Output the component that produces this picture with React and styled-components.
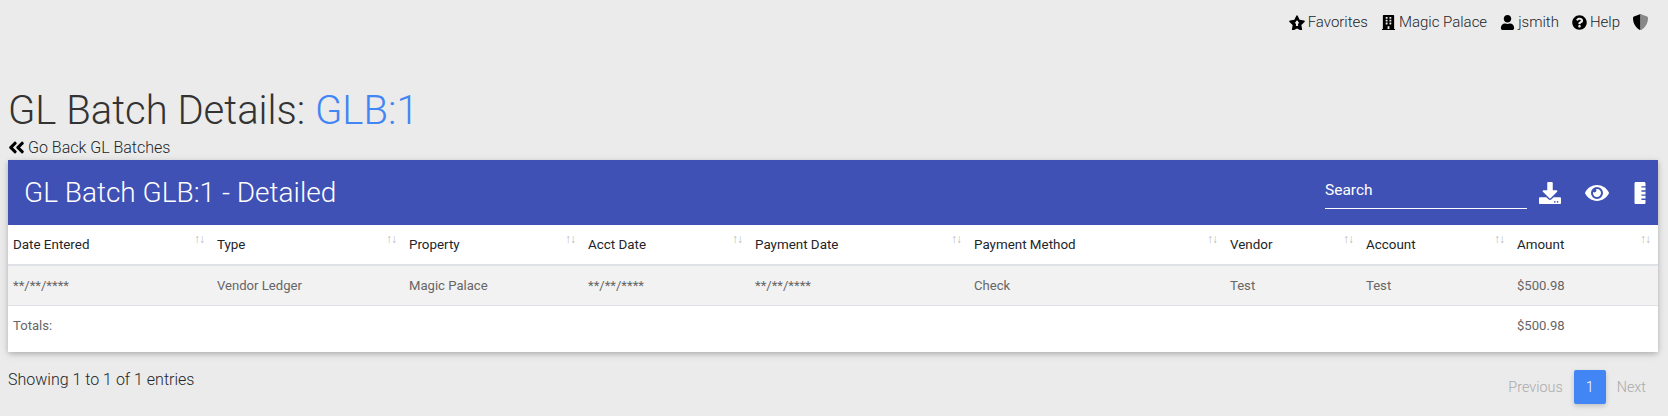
import React from "react";
import styled, { createGlobalStyle } from "styled-components";
import {
  FaBuilding,
  FaUser,
  FaQuestionCircle,
  FaAngleDoubleLeft,
  FaDownload,
  FaEye,
  FaRulerVertical,
} from "react-icons/fa";

const GlobalStyle = createGlobalStyle`
  html, body {
    margin: 0;
    padding: 0;
    background: #ebebeb;
    font-family: Roboto, "Liberation Sans", sans-serif;
    color: #212529;
  }
`;

const Page = styled.div`
  width: 1668px;
  height: 416px;
  box-sizing: border-box;
  padding: 0 10px 0 8px;
  overflow: hidden;
`;

const TopNav = styled.div`
  display: flex;
  justify-content: flex-end;
  align-items: center;
  gap: 13px;
  height: 44px;
  padding-right: 10px;
`;

const NavItem = styled.span`
  display: flex;
  align-items: center;
  gap: 3px;
  font-size: 15px;
  font-weight: 300;
  color: #212529;
  svg {
    color: #000;
    font-size: 15px;
  }
`;

const Title = styled.h1`
  margin: 43px 0 0;
  font-size: 40px;
  line-height: 48px;
  font-weight: 300;
  color: #333;
`;

const TitleLink = styled.span`
  color: #4285f4;
`;

const BackLink = styled.div`
  display: flex;
  align-items: center;
  gap: 2px;
  height: 25px;
  font-size: 16px;
  font-weight: 300;
  color: #212529;
  svg {
    color: #000;
    font-size: 19px;
    margin-left: -1px;
  }
`;

const Card = styled.div`
  background: #fff;
  border-radius: 0 0 4px 4px;
  box-shadow: 0 2px 5px 0 rgba(0, 0, 0, 0.18), 0 2px 10px 0 rgba(0, 0, 0, 0.1);
`;

const Banner = styled.div`
  display: flex;
  align-items: center;
  height: 65px;
  padding: 0 7px 0 16px;
  background: #3f51b5;
  color: #fff;
`;

const BannerTitle = styled.div`
  flex: 1;
  font-size: 28px;
  font-weight: 300;
`;

const SearchBox = styled.div`
  width: 202px;
  height: 33px;
  box-sizing: border-box;
  border-bottom: 1px solid #fff;
  font-size: 15.5px;
  font-weight: 400;
  line-height: 28px;
`;

const ToolIcons = styled.div`
  display: flex;
  align-items: center;
  gap: 20px;
  margin-left: 12px;
  svg {
    display: block;
    color: #fff;
  }
`;

const DownloadIcon = styled(FaDownload)`
  margin-right: 4px;
`;

const Table = styled.table`
  width: 100%;
  table-layout: fixed;
  border-collapse: collapse;
  font-size: 13.1px;
`;

const HeadCell = styled.th`
  position: relative;
  height: 39px;
  padding: 0 5px;
  text-align: left;
  font-size: 13.4px;
  font-weight: 400;
  color: #212529;
  border-bottom: 2px solid #dee2e6;
`;

const SortMark = styled.span`
  position: absolute;
  top: 7px;
  right: 8px;
  font-size: 12px;
  line-height: 14px;
  letter-spacing: -1px;
  color: #bbb;
`;

const Row = styled.tr`
  background: ${(props) => (props.$shaded ? "#f2f2f2" : "#fff")};
`;

const Cell = styled.td`
  height: 39px;
  padding: ${(props) => (props.$foot ? "0 5px 7px" : "0 5px")};
  color: #666;
  font-weight: 400;
  border-bottom: ${(props) => (props.$foot ? "none" : "1px solid #dee2e6")};
`;

const Col = styled.col`
  width: ${(props) => props.$w}px;
`;

const Footer = styled.div`
  display: flex;
  justify-content: space-between;
  align-items: flex-start;
  padding-top: 18px;
`;

const EntriesInfo = styled.div`
  font-size: 16px;
  font-weight: 300;
  line-height: 20px;
  color: #212529;
`;

const Pager = styled.div`
  display: flex;
  align-items: center;
  gap: 11px;
  padding-right: 12px;
  font-size: 14.4px;
  font-weight: 300;
  color: #aaa;
`;

const PageButton = styled.span`
  display: flex;
  align-items: center;
  justify-content: center;
  width: 32px;
  height: 34px;
  border-radius: 2px;
  background: #4285f4;
  color: #fff;
  box-shadow: 0 2px 5px 0 rgba(0, 0, 0, 0.18);
`;

const columns = [
  { label: "Date Entered", width: 204 },
  { label: "Type", width: 192 },
  { label: "Property", width: 179 },
  { label: "Acct Date", width: 167 },
  { label: "Payment Date", width: 219 },
  { label: "Payment Method", width: 256 },
  { label: "Vendor", width: 136 },
  { label: "Account", width: 151 },
  { label: "Amount", width: 146 },
];

const rowData = [
  "**/**/****",
  "Vendor Ledger",
  "Magic Palace",
  "**/**/****",
  "**/**/****",
  "Check",
  "Test",
  "Test",
  "$500.98",
];

const footData = ["Totals:", "", "", "", "", "", "", "", "$500.98"];

// star with a small cut-out in the middle
const FavStar = () => (
  <svg width="16" height="15" viewBox="0 0 576 512">
    <path
      fill="#000"
      fillRule="evenodd"
      d="M259 18 194 160 36 182c-28 4-40 38-19 58l114 110-27 155c-5 28 25 49 50 36l134-72 134 72c25 13 55-8 50-36l-27-155 114-110c21-20 9-54-19-58l-158-22L317 18c-12-25-46-25-58 0zM250 190h76v60h50l-50 60v70h-76v-70l-50-60h50z"
    />
  </svg>
);

// half of the shield is greyed out in the original
const HalfShield = () => (
  <svg width="15" height="16" viewBox="0 0 480 512">
    <path
      fill="#000"
      d="M240 0c-6 0-12 1-18 4L30 82C13 89 0 106 0 124c0 193 111 327 222 384 6 3 12 4 18 4z"
    />
    <path
      fill="#888"
      d="M240 0c6 0 12 1 18 4l192 78c17 7 30 24 30 42 0 193-111 327-222 384-6 3-12 4-18 4z"
    />
  </svg>
);

function App() {
  return (
    <Page>
      <GlobalStyle />
      <TopNav>
        <NavItem><FavStar />Favorites</NavItem>
        <NavItem><FaBuilding />Magic Palace</NavItem>
        <NavItem><FaUser />jsmith</NavItem>
        <NavItem><FaQuestionCircle />Help</NavItem>
        <HalfShield />
      </TopNav>
      <Title>
        GL Batch Details: <TitleLink>GLB:1</TitleLink>
      </Title>
      <BackLink><FaAngleDoubleLeft />Go Back GL Batches</BackLink>
      <Card>
        <Banner>
          <BannerTitle>GL Batch GLB:1 - Detailed</BannerTitle>
          <SearchBox>Search</SearchBox>
          <ToolIcons>
            <DownloadIcon size={22} />
            <FaEye size={24} />
            <FaRulerVertical size={22} />
          </ToolIcons>
        </Banner>
        <Table>
          <colgroup>
            {columns.map((c) => (
              <Col key={c.label} $w={c.width} />
            ))}
          </colgroup>
          <thead>
            <tr>
              {columns.map((c) => (
                <HeadCell key={c.label}>
                  {c.label}
                  <SortMark>↑↓</SortMark>
                </HeadCell>
              ))}
            </tr>
          </thead>
          <tbody>
            <Row $shaded>
              {rowData.map((v, i) => (
                <Cell key={i}>{v}</Cell>
              ))}
            </Row>
          </tbody>
          <tfoot>
            <Row>
              {footData.map((v, i) => (
                <Cell key={i} $foot>{v}</Cell>
              ))}
            </Row>
          </tfoot>
        </Table>
      </Card>
      <Footer>
        <EntriesInfo>Showing 1 to 1 of 1 entries</EntriesInfo>
        <Pager>
          <span>Previous</span>
          <PageButton>1</PageButton>
          <span>Next</span>
        </Pager>
      </Footer>
    </Page>
  );
}

export default App;
